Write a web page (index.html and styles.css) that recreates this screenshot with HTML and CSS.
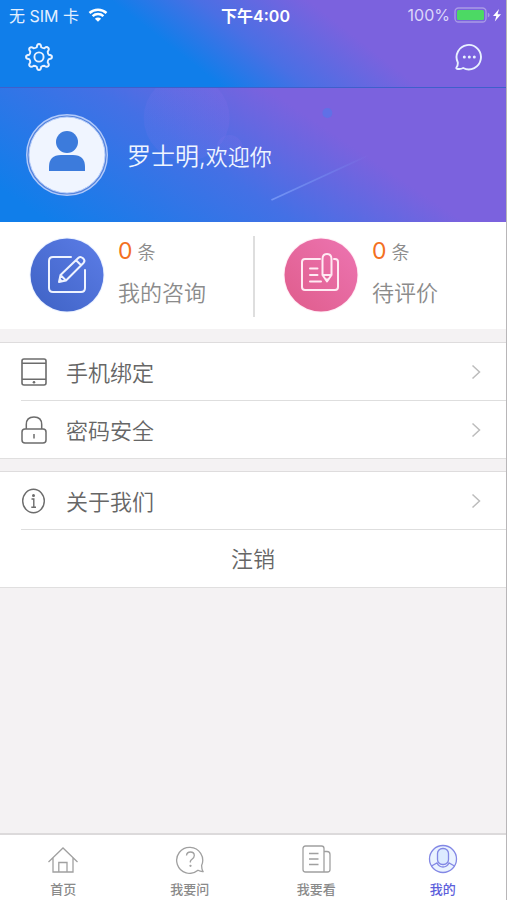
FILE: index.html
```html
<!DOCTYPE html>
<html lang="zh-CN">
<head>
<meta charset="utf-8">
<meta name="viewport" content="width=device-width, initial-scale=1">
<title>我的</title>
<link rel="stylesheet" href="styles.css">
</head>
<body>
<div class="app">
  <header class="topbar">
    <div class="status">
      <div class="status-left">
        <span>无 SIM 卡</span>
        <svg class="wifi" viewBox="0 0 20 14" aria-hidden="true">
          <path d="M1.500 5A12.500 12.500 0 0 1 18.500 5M4.600 8.200A8 8 0 0 1 15.400 8.200" fill="none" stroke="currentColor" stroke-width="2.500"/>
          <path d="M10 13.800 6.900 10.700A4.400 4.400 0 0 1 13.100 10.700Z" fill="currentColor"/>
        </svg>
      </div>
      <time class="clock">下午4:00</time>
      <div class="status-right">
        <span>100%</span>
        <svg class="battery" viewBox="0 0 48 16" aria-hidden="true">
          <rect x="1" y="1" width="31" height="14" rx="3.500" fill="none" stroke="#a99be6" stroke-width="1.300"/>
          <rect x="3" y="3" width="27" height="10" rx="1.500" fill="#4cd964"/>
          <path d="M33.800 5.500q1.800.8 1.800 2.500t-1.800 2.500z" fill="#a99be6"/>
          <path d="M45 2 39 9h3.300l-1.500 5.500L47 7.300h-3.400z" fill="#fff"/>
        </svg>
      </div>
    </div>
    <div class="actions">
      <button class="icon-button" type="button" aria-label="设置">
        <svg class="action-icon" viewBox="0 0 28 28" aria-hidden="true">
          <g fill="none" stroke="currentColor" stroke-width="1.900" stroke-linejoin="round">
            <path d="M11.800 4.300 Q12 1 14 1 Q16 1 16.200 4.300 Q17.800 5.300 19.300 5.300 Q21.800 3.200 23.200 4.800 Q24.700 6.200 22.700 8.700 Q22.700 10.200 23.700 11.800 Q27 12 27 14 Q27 16 23.700 16.200 Q22.700 17.800 22.700 19.300 Q24.700 21.800 23.200 23.200 Q21.800 24.700 19.300 22.700 Q17.800 22.700 16.200 23.700 Q16 27 14 27 Q12 27 11.800 23.700 Q10.200 22.700 8.700 22.700 Q6.200 24.700 4.800 23.200 Q3.300 21.800 5.300 19.300 Q5.300 17.800 4.300 16.200 Q1 16 1 14 Q1 12 4.300 11.800 Q5.300 10.200 5.300 8.700 Q3.300 6.200 4.800 4.800 Q6.200 3.300 8.700 5.300 Q10.200 5.300 11.800 4.300Z"/>
            <circle cx="14" cy="14" r="4.600"/>
          </g>
        </svg>
      </button>
      <button class="icon-button" type="button" aria-label="消息">
        <svg class="action-icon" viewBox="0 0 28 28" aria-hidden="true">
          <path d="M2.800 19.500A12.200 12.200 0 1 1 8.200 25Q5.500 26.500 1.800 25.700 0.900 25.300 1.600 24.300 3 22.300 2.800 19.500Z" fill="none" stroke="currentColor" stroke-width="1.900" stroke-linejoin="round"/>
          <g fill="currentColor"><circle cx="9.300" cy="14" r="1.500"/><circle cx="14.300" cy="14" r="1.500"/><circle cx="19.300" cy="14" r="1.500"/></g>
        </svg>
      </button>
    </div>
  </header>

  <main class="content">
    <section class="hero">
      <svg class="hero-art" viewBox="0 0 507 134" preserveAspectRatio="none" aria-hidden="true">
        <defs>
          <linearGradient id="bubble" x1="0" y1="0.700" x2="1" y2="0.300"><stop offset="0" stop-color="#8a7bf0" stop-opacity="0.120"/><stop offset="1" stop-color="#9070ec" stop-opacity="0.160"/></linearGradient>
          <linearGradient id="trail" gradientUnits="userSpaceOnUse" x1="272" y1="112" x2="370" y2="67"><stop offset="0" stop-color="#82a1fa" stop-opacity="0.750"/><stop offset="1" stop-color="#82a1fa" stop-opacity="0"/></linearGradient>
        </defs>
        <circle cx="187" cy="30" r="43" fill="url(#bubble)"/>
        <circle cx="230" cy="60" r="13" fill="url(#bubble)"/>
        <circle cx="328" cy="25" r="5" fill="#4b7cec" opacity="0.550"/>
        <path d="M272 112 370 67" stroke="url(#trail)" stroke-width="1.800"/>
      </svg>
      <svg class="avatar" viewBox="0 0 82 82" role="img" aria-label="头像">
        <circle cx="41" cy="41" r="40.300" fill="#5483dd" stroke="#b2cafa" stroke-width="1.400"/>
        <circle cx="41" cy="41" r="38" fill="#f0f5ff" stroke="#b8cffa" stroke-width="1"/>
        <circle cx="41" cy="28" r="11" fill="#3c7bdc"/>
        <path d="M23 57V53Q23 41 35 41H47Q59 41 59 53V57Z" fill="#3c7bdc"/>
      </svg>
      <p class="greeting"><span class="user-name">罗士明,</span>欢迎你</p>
    </section>

    <section class="stats">
      <a class="stat" href="#consult">
        <svg class="stat-icon" viewBox="0 0 76 76" aria-hidden="true">
          <defs><linearGradient id="blue" x1="0" y1="1" x2="1" y2="0"><stop offset="0" stop-color="#3e62c4"/><stop offset="1" stop-color="#5c7de7"/></linearGradient></defs>
          <circle cx="38" cy="38" r="37.500" fill="#eaf1ff"/>
          <circle cx="38" cy="38" r="36.500" fill="url(#blue)"/>
          <g fill="none" stroke="#eef3ff" stroke-width="2" stroke-linecap="round" stroke-linejoin="round">
            <path d="M42 20H24Q20 20 20 24V51Q20 55 24 55H52Q56 55 56 51V33"/>
            <path d="M30 45 31.500 38 49.500 20.700Q51.500 19 54 21.300 56.500 23.700 54.700 25.700L37 43.500ZM31.500 38 37 43.500M47 23.200 52.200 28.300"/>
          </g>
          <path d="M30 45 30.900 41 34 44Z" fill="#eef3ff"/>
        </svg>
        <span class="stat-text"><span class="stat-count"><b class="number">0</b>条</span><span class="stat-label">我的咨询</span></span>
      </a>
      <a class="stat" href="#review">
        <svg class="stat-icon" viewBox="0 0 76 76" aria-hidden="true">
          <defs><linearGradient id="pink" x1="0" y1="1" x2="1" y2="0"><stop offset="0" stop-color="#df5c8b"/><stop offset="1" stop-color="#ed75b2"/></linearGradient></defs>
          <circle cx="38" cy="38" r="37.500" fill="#ffedf5"/>
          <circle cx="38" cy="38" r="36.500" fill="url(#pink)"/>
          <g fill="none" stroke="#ffeaf3" stroke-width="2" stroke-linecap="round" stroke-linejoin="round">
            <path d="M37 22H22Q19 22 19 25V50Q19 53 22 53H52Q55 53 55 50V25Q55 22 52 22H51"/>
            <path d="M39.500 38V22Q39.500 17 44 17 48.500 17 48.500 22V38L44 44.500ZM39.500 38H48.500M27 31.500H34.500M27 38H34.500M27 44.500H38"/>
          </g>
          <path d="M41.800 41.500H46.200L44 44.500Z" fill="#ffeaf3"/>
        </svg>
        <span class="stat-text"><span class="stat-count"><b class="number">0</b>条</span><span class="stat-label">待评价</span></span>
      </a>
    </section>

    <nav class="group" aria-label="账号">
      <a class="row" href="#phone">
        <svg class="row-icon" viewBox="0 0 26 30" aria-hidden="true"><g fill="none" stroke="currentColor" stroke-width="1.600"><rect x="1" y="2" width="24" height="26" rx="2"/><path d="M1 6.300H25M1 22.300H25"/></g><circle cx="13" cy="25.200" r="1.300" fill="currentColor"/></svg>
        <span class="row-label">手机绑定</span>
        <svg class="chevron" viewBox="0 0 10 16" aria-hidden="true"><path d="M1.500 1.500 8.500 8 1.500 14.500"/></svg>
      </a>
      <a class="row" href="#password">
        <svg class="row-icon" viewBox="0 0 26 30" aria-hidden="true"><g fill="none" stroke="currentColor" stroke-width="1.500"><rect x="1" y="14" width="24" height="14" rx="3"/><path d="M5.300 14V9.500Q5.300 2 13 2T20.700 9.500V14"/><path d="M13 19V23.500"/></g></svg>
        <span class="row-label">密码安全</span>
        <svg class="chevron" viewBox="0 0 10 16" aria-hidden="true"><path d="M1.500 1.500 8.500 8 1.500 14.500"/></svg>
      </a>
    </nav>

    <nav class="group" aria-label="其他">
      <a class="row" href="#about">
        <svg class="row-icon" viewBox="0 0 26 30" aria-hidden="true"><g fill="none" stroke="currentColor" stroke-width="1.400"><ellipse cx="12.500" cy="15" rx="10.800" ry="11.700"/><path d="M10.500 13H12.800V21M10.300 21.300H15"/></g><circle cx="12.500" cy="9.500" r="1.500" fill="currentColor"/></svg>
        <span class="row-label">关于我们</span>
        <svg class="chevron" viewBox="0 0 10 16" aria-hidden="true"><path d="M1.500 1.500 8.500 8 1.500 14.500"/></svg>
      </a>
      <button class="logout" type="button">注销</button>
    </nav>
  </main>

  <nav class="tabs" aria-label="主导航">
    <a class="tab" href="#home">
      <svg class="tab-icon" viewBox="0 0 32 30" aria-hidden="true"><path d="M1.500 18 16 4 30.500 18M6 14V28H26V14M11.800 28V18.500H20V28"/></svg>
      <span>首页</span>
    </a>
    <a class="tab" href="#ask">
      <svg class="tab-icon" viewBox="0 0 32 30" aria-hidden="true"><path d="M24 26.300A13 13 0 1 1 27.600 21.500Q27.600 25 29 27.500 26.500 27.700 24 26.300Z"/><path d="M12.500 11.500Q12.800 8 16.500 8T20.300 11.500Q20.300 13.500 18 15.300T16.500 18.500"/><circle cx="16.500" cy="21.800" r=".5"/></svg>
      <span>我要问</span>
    </a>
    <a class="tab" href="#read">
      <svg class="tab-icon" viewBox="0 0 32 30" aria-hidden="true"><path d="M5.500 2H21.500Q24 2 24 4.500V28H5.500Q3 28 3 25.500V4.500Q3 2 5.500 2ZM24 7.500H27Q30 7.500 30 10.500V25.500Q30 28 27.500 28H24M9 9.500H18.500M9 15H18.500M9 20.500H18.500"/></svg>
      <span>我要看</span>
    </a>
    <a class="tab tab-active" href="#me" aria-current="page">
      <svg class="tab-icon" viewBox="0 0 32 30" aria-hidden="true"><circle cx="16" cy="15" r="13.500" fill="#eaf3ff"/><rect x="10.500" y="4.500" width="11" height="16" rx="5" fill="#dcebff"/><path d="M4.500 22 10 19Q12 23 16 23T22 19L27.500 22"/></svg>
      <span>我的</span>
    </a>
  </nav>
</div>
</body>
</html>
```

FILE: styles.css
```css
* {
  box-sizing: border-box;
}

body {
  margin: 0;
  background: #f4f2f3;
  color: #666;
  font-family: Inter, "Noto Sans CJK SC", sans-serif;
  font-size: 22px;
  font-weight: 350;
}

a {
  color: inherit;
  text-decoration: none;
}

button {
  padding: 0;
  border: 0;
  background: none;
  color: inherit;
  font: inherit;
  cursor: pointer;
}

svg {
  display: block;
  flex: none;
}

.app {
  display: flex;
  flex-direction: column;
  min-height: 100vh;
  border-right: 1px solid #b8b6b8;
}

.topbar {
  height: 88px;
  border-bottom: 1px solid #3f5fcb;
  background: linear-gradient(38deg, #107eea 36%, #4a6fe4 50%, #7b62de 68%);
  color: #fff;
}

.status {
  display: grid;
  grid-template-columns: 1fr auto 1fr;
  align-items: center;
  height: 30px;
  padding: 0 4px 0 9px;
  font-size: 16px;
  font-weight: 400;
}

.status-left,
.status-right {
  display: flex;
  align-items: center;
}

.status-left {
  gap: 9px;
  color: #e4f0ff;
}

.status-right {
  justify-content: flex-end;
  gap: 4px;
  color: #dcd6fa;
}

.wifi {
  width: 20px;
  height: 14px;
  color: #fff;
}

.battery {
  width: 48px;
  height: 16px;
}

.clock {
  font-weight: 600;
}

.actions {
  display: flex;
  justify-content: space-between;
  padding: 13px 23px 0 25px;
}

.icon-button {
  color: #e8f1ff;
}

.action-icon {
  width: 28px;
  height: 28px;
}

.hero {
  position: relative;
  display: flex;
  align-items: center;
  gap: 19px;
  height: 134px;
  padding: 0 26px;
  background: linear-gradient(34deg, #107eea 7%, #4470e5 42%, #7b62de 66%);
  color: #eff5ff;
}

.hero-art {
  position: absolute;
  inset: 0;
  width: 100%;
  height: 100%;
}

.avatar {
  position: relative;
  width: 82px;
  height: 82px;
}

.greeting {
  position: relative;
  margin: 0;
  padding-bottom: 2px;
}

.user-name {
  font-size: 24px;
}

.stats {
  display: grid;
  grid-template-columns: 1fr 1fr;
  padding: 14px 0 12px;
  background: #fff;
}

.stat {
  display: flex;
  gap: 13px;
  height: 81px;
  padding-left: 29px;
  color: #8b8b8b;
}

.stat + .stat {
  border-left: 2px solid #dedede;
  padding-left: 28px;
}

.stat-icon {
  width: 76px;
  height: 76px;
  margin-top: 1px;
}

.stat-text {
  display: flex;
  flex-direction: column;
  gap: 11px;
}

.stat-count {
  display: flex;
  align-items: baseline;
  gap: 5px;
  font-size: 18px;
  line-height: 30px;
}

.number {
  color: #f37021;
  font-size: 23px;
  font-weight: 400;
}

.stat-label {
  line-height: 28px;
}

.group {
  margin-top: 13px;
  padding-left: 21px;
  border-top: 1px solid #dedcdd;
  border-bottom: 1px solid #e0dfdf;
  background: #fff;
}

.group + .group {
  margin-top: 12px;
}

.row {
  display: flex;
  align-items: center;
  gap: 19px;
  height: 57px;
  padding-right: 25px;
}

.row + .row,
.logout {
  height: 58px;
  border-top: 1px solid #dedede;
}

.row-icon {
  width: 26px;
  height: 30px;
  color: #6c6c6c;
}

.row-label {
  flex: 1;
  padding-bottom: 2px;
}

.chevron {
  width: 10px;
  height: 16px;
  fill: none;
  stroke: #bcbcbc;
  stroke-width: 1.500;
}

.logout {
  display: block;
  width: 100%;
  padding: 0 21px 4px 0;
}

.tabs {
  display: grid;
  grid-template-columns: repeat(4, 1fr);
  height: 67px;
  margin-top: auto;
  border-top: 2px solid #dcdadb;
  background: #fff;
}

.tab {
  display: flex;
  flex-direction: column;
  align-items: center;
  gap: 6px;
  padding-top: 9px;
  color: #8a8a8a;
  font-size: 13px;
  font-weight: 500;
  line-height: 18px;
}

.tab-icon {
  width: 32px;
  height: 30px;
  fill: none;
  stroke: #a0a0a0;
  stroke-width: 1.300;
}

.tab-active {
  color: #5c5edb;
}

.tab-active .tab-icon {
  stroke: #8388e5;
}
```
